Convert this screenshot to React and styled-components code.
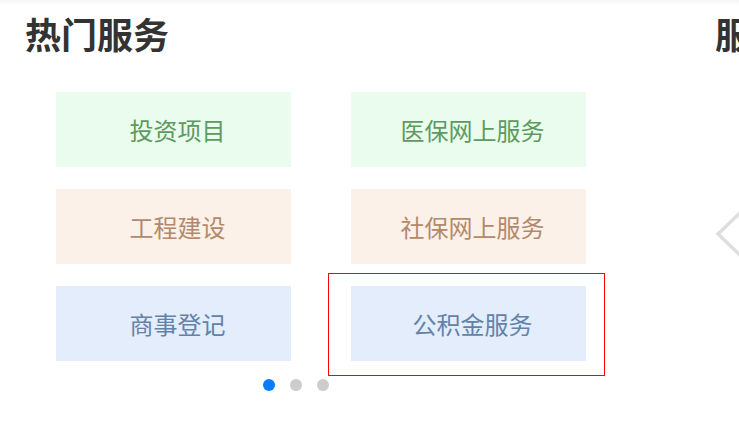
import React from "react";
import styled, { createGlobalStyle } from "styled-components";

const GlobalStyle = createGlobalStyle`
  html, body {
    margin: 0;
    padding: 0;
    background: #fff;
    overflow: hidden;
  }
  body {
    font-family: "Noto Sans CJK SC", "Noto Sans", sans-serif;
  }
`;

const palette = {
  green: { bg: "#e9fcee", fg: "#5e9a5e" },
  peach: { bg: "#fcf1e8", fg: "#b3896b" },
  blue: { bg: "#e3edfb", fg: "#6382a8" }
};

const services = [
  { name: "投资项目", tone: "green" },
  { name: "医保网上服务", tone: "green" },
  { name: "工程建设", tone: "peach" },
  { name: "社保网上服务", tone: "peach" },
  { name: "商事登记", tone: "blue" },
  { name: "公积金服务", tone: "blue", active: true }
];

const Page = styled.div`
  display: flex;
  width: 739px;
  height: 423px;
  overflow: hidden;
  background: linear-gradient(#f6f6f6 0, #fff 6px);
`;

const Section = styled.section`
  flex: 0 0 592px;
  display: flex;
  flex-direction: column;
`;

const Title = styled.h2`
  margin: 12px 0 0 25px;
  font-size: 36px;
  line-height: 42px;
  font-weight: 700;
  color: #333;
  white-space: nowrap;
`;

const Grid = styled.div`
  margin: 38px 0 0 56px;
  display: grid;
  grid-template-columns: repeat(2, 235px);
  grid-auto-rows: 75px;
  column-gap: 60px;
  row-gap: 22px;
`;

const Card = styled.div`
  position: relative;
  display: flex;
  align-items: center;
  justify-content: center;
  padding-left: 8px;
  background: ${({ tone }) => palette[tone].bg};
  color: ${({ tone }) => palette[tone].fg};
  font-size: 24px;
  cursor: pointer;
`;

const Highlight = styled.span`
  position: absolute;
  top: -13px;
  left: -23px;
  right: -19px;
  bottom: -15px;
  border: 1px solid #ff0000;
  pointer-events: none;
`;

const Dots = styled.div`
  display: flex;
  justify-content: center;
  gap: 15px;
  margin-top: 18px;
`;

const Dot = styled.span`
  width: 12px;
  height: 12px;
  border-radius: 50%;
  background: ${({ active }) => (active ? "#0a7cff" : "#cccccc")};
`;

const NextSection = styled.section`
  position: relative;
  margin-left: 124px;
  flex: 0 0 auto;
  width: 400px;
`;

const NextTitle = styled(Title)`
  margin-left: -1px;
`;

const PrevArrow = styled.svg`
  position: absolute;
  left: -1px;
  top: 210px;
`;

const App = () => (
  <Page>
    <GlobalStyle />
    <Section>
      <Title>热门服务</Title>
      <Grid>
        {services.map(({ name, tone, active }) => (
          <Card key={name} tone={tone}>
            {name}
            {active && <Highlight />}
          </Card>
        ))}
      </Grid>
      <Dots>
        <Dot active />
        <Dot />
        <Dot />
      </Dots>
    </Section>
    <NextSection>
      <NextTitle>服务指南</NextTitle>
      <PrevArrow width="30" height="50" viewBox="0 0 30 50">
        <polyline
          points="26,2 3,24 26,46"
          fill="none"
          stroke="#dedede"
          strokeWidth="3.5"
        />
      </PrevArrow>
    </NextSection>
  </Page>
);

export default App;
